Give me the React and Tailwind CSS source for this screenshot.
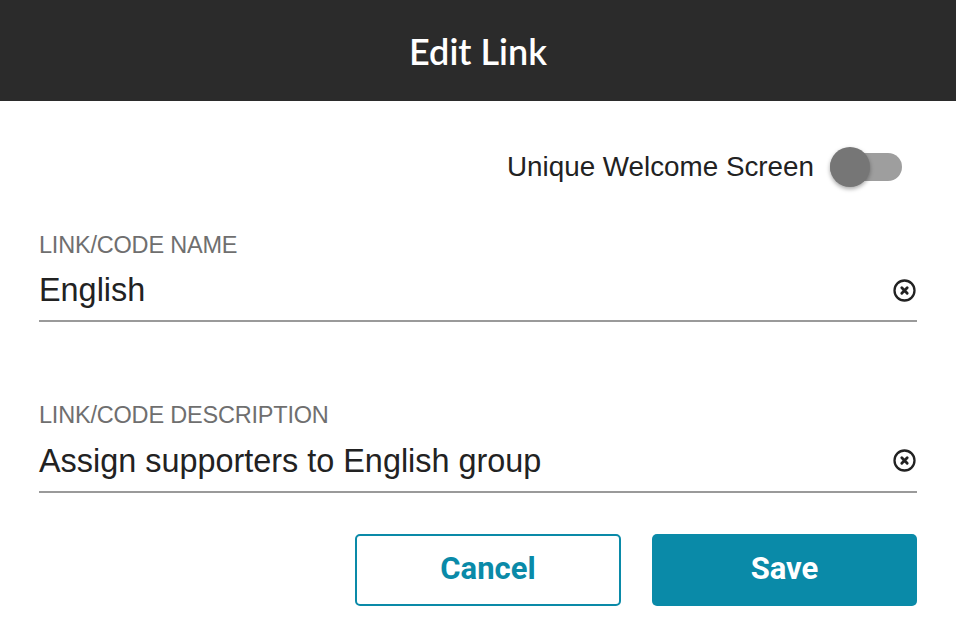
import React, { useState } from 'react';

const ClearIcon = () => (
  <svg width="25" height="25" viewBox="0 0 24 24" fill="none" stroke="#222" strokeLinecap="round">
    <circle cx="12" cy="12" r="9.6" strokeWidth="2.2" />
    <path d="M9.4 9.4l5.2 5.2M14.6 9.4l-5.2 5.2" strokeWidth="2.7" />
  </svg>
);

const Field = ({ label, value }) => (
  <div className="flex flex-col">
    <label className="text-[23.5px] leading-none uppercase text-[#6f6f6f] tracking-[-0.2px]">{label}</label>
    <div className="flex items-center justify-between border-b-2 border-[#9a9a9a] mt-[14px] pb-[11px]">
      <span className="text-[32.4px] leading-[38px] text-[#222]">{value}</span>
      <button className="flex items-center">
        <ClearIcon />
      </button>
    </div>
  </div>
);

export default function App() {
  const [unique, setUnique] = useState(false);

  return (
    <div className="w-[956px] h-[644px] bg-white flex flex-col" style={{ fontFamily: '"Liberation Sans", Arial, sans-serif' }}>
      {/* header */}
      <header className="h-[101px] bg-[#2b2b2b] flex items-center justify-center shrink-0">
        <h1 className="text-white text-[36px] font-semibold" style={{ fontFamily: 'Lato, "Open Sans", sans-serif' }}>
          Edit Link
        </h1>
      </header>

      <div className="flex flex-col px-[39px]">
        {/* toggle row */}
        <div className="flex items-center justify-end gap-[16px] mt-[45px] mr-[15px]">
          <span className="text-[27.8px] text-[#222]">Unique Welcome Screen</span>
          <button
            onClick={() => setUnique(!unique)}
            className="relative w-[72px] h-[28px] rounded-full bg-[#9e9e9e]"
          >
            <span className="absolute left-0 top-[-6px] w-[40px] h-[40px] rounded-full bg-[#767676] shadow-[0_2px_4px_rgba(0,0,0,0.35)]" />
          </button>
        </div>

        <div className="mt-[46px]">
          <Field label="Link/Code Name" value="English" />
        </div>
        <div className="mt-[82px]">
          <Field label="Link/Code Description" value="Assign supporters to English group" />
        </div>

        {/* actions */}
        <div className="flex justify-end gap-[31px] mt-[41px]" style={{ fontFamily: 'Roboto, sans-serif' }}>
          <button className="w-[266px] h-[72px] rounded-[5px] border-2 border-[#0a8aa8] text-[#0a8aa8] text-[31px] font-bold">
            Cancel
          </button>
          <button className="w-[265px] h-[72px] rounded-[5px] bg-[#0a8aa8] text-white text-[31px] font-bold">
            Save
          </button>
        </div>
      </div>
    </div>
  );
}
